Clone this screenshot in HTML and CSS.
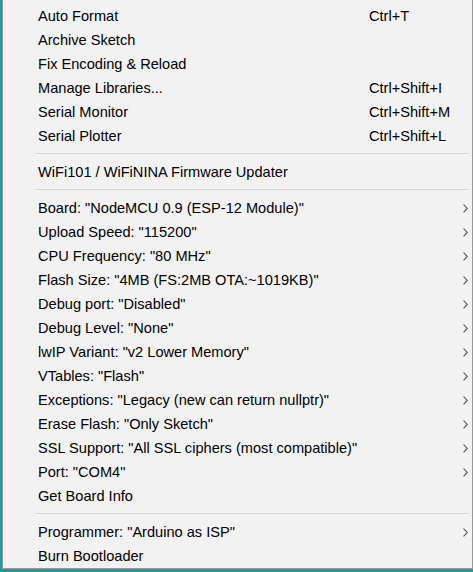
FILE: index.html
```html
<!DOCTYPE html>
<html>
<head>
<meta charset="utf-8">
<link rel="stylesheet" href="styles.css">
</head>
<body>
<div class="menu">
  <div class="item"><span class="label">Auto Format</span><span class="key">Ctrl+T</span></div>
  <div class="item"><span class="label">Archive Sketch</span></div>
  <div class="item"><span class="label">Fix Encoding &amp; Reload</span></div>
  <div class="item"><span class="label">Manage Libraries...</span><span class="key">Ctrl+Shift+I</span></div>
  <div class="item"><span class="label">Serial Monitor</span><span class="key">Ctrl+Shift+M</span></div>
  <div class="item"><span class="label">Serial Plotter</span><span class="key">Ctrl+Shift+L</span></div>
  <div class="sep"></div>
  <div class="item"><span class="label">WiFi101 / WiFiNINA Firmware Updater</span></div>
  <div class="sep"></div>
  <div class="item sub"><span class="label">Board: "NodeMCU 0.9 (ESP-12 Module)"</span><svg class="arrow" width="5" height="9" viewBox="0 0 5 9"><path d="M0.5 0.5 L4.2 4.5 L0.5 8.5" fill="none" stroke="#4a4a4a" stroke-width="1.1"/></svg></div>
  <div class="item sub"><span class="label">Upload Speed: "115200"</span><svg class="arrow" width="5" height="9" viewBox="0 0 5 9"><path d="M0.5 0.5 L4.2 4.5 L0.5 8.5" fill="none" stroke="#4a4a4a" stroke-width="1.1"/></svg></div>
  <div class="item sub"><span class="label">CPU Frequency: "80 MHz"</span><svg class="arrow" width="5" height="9" viewBox="0 0 5 9"><path d="M0.5 0.5 L4.2 4.5 L0.5 8.5" fill="none" stroke="#4a4a4a" stroke-width="1.1"/></svg></div>
  <div class="item sub"><span class="label">Flash Size: "4MB (FS:2MB OTA:~1019KB)"</span><svg class="arrow" width="5" height="9" viewBox="0 0 5 9"><path d="M0.5 0.5 L4.2 4.5 L0.5 8.5" fill="none" stroke="#4a4a4a" stroke-width="1.1"/></svg></div>
  <div class="item sub"><span class="label">Debug port: "Disabled"</span><svg class="arrow" width="5" height="9" viewBox="0 0 5 9"><path d="M0.5 0.5 L4.2 4.5 L0.5 8.5" fill="none" stroke="#4a4a4a" stroke-width="1.1"/></svg></div>
  <div class="item sub"><span class="label">Debug Level: "None"</span><svg class="arrow" width="5" height="9" viewBox="0 0 5 9"><path d="M0.5 0.5 L4.2 4.5 L0.5 8.5" fill="none" stroke="#4a4a4a" stroke-width="1.1"/></svg></div>
  <div class="item sub"><span class="label">lwIP Variant: "v2 Lower Memory"</span><svg class="arrow" width="5" height="9" viewBox="0 0 5 9"><path d="M0.5 0.5 L4.2 4.5 L0.5 8.5" fill="none" stroke="#4a4a4a" stroke-width="1.1"/></svg></div>
  <div class="item sub"><span class="label">VTables: "Flash"</span><svg class="arrow" width="5" height="9" viewBox="0 0 5 9"><path d="M0.5 0.5 L4.2 4.5 L0.5 8.5" fill="none" stroke="#4a4a4a" stroke-width="1.1"/></svg></div>
  <div class="item sub"><span class="label">Exceptions: "Legacy (new can return nullptr)"</span><svg class="arrow" width="5" height="9" viewBox="0 0 5 9"><path d="M0.5 0.5 L4.2 4.5 L0.5 8.5" fill="none" stroke="#4a4a4a" stroke-width="1.1"/></svg></div>
  <div class="item sub"><span class="label">Erase Flash: "Only Sketch"</span><svg class="arrow" width="5" height="9" viewBox="0 0 5 9"><path d="M0.5 0.5 L4.2 4.5 L0.5 8.5" fill="none" stroke="#4a4a4a" stroke-width="1.1"/></svg></div>
  <div class="item sub"><span class="label">SSL Support: "All SSL ciphers (most compatible)"</span><svg class="arrow" width="5" height="9" viewBox="0 0 5 9"><path d="M0.5 0.5 L4.2 4.5 L0.5 8.5" fill="none" stroke="#4a4a4a" stroke-width="1.1"/></svg></div>
  <div class="item sub"><span class="label">Port: "COM4"</span><svg class="arrow" width="5" height="9" viewBox="0 0 5 9"><path d="M0.5 0.5 L4.2 4.5 L0.5 8.5" fill="none" stroke="#4a4a4a" stroke-width="1.1"/></svg></div>
  <div class="item"><span class="label">Get Board Info</span></div>
  <div class="sep"></div>
  <div class="item sub"><span class="label">Programmer: "Arduino as ISP"</span><svg class="arrow" width="5" height="9" viewBox="0 0 5 9"><path d="M0.5 0.5 L4.2 4.5 L0.5 8.5" fill="none" stroke="#4a4a4a" stroke-width="1.1"/></svg></div>
  <div class="item"><span class="label">Burn Bootloader</span></div>
</div>
</body>
</html>
```
FILE: styles.css
```css
html, body {
  margin: 0;
  padding: 0;
}
body {
  width: 473px;
  height: 572px;
  background: #1f9aa0;
  overflow: hidden;
  font-family: "Liberation Sans", Arial, sans-serif;
  font-size: 14.6px;
  color: #000;
}
.menu {
  margin-left: 2px;
  width: 471px;
  height: 569px;
  box-sizing: border-box;
  background: #f2f2f2;
  border-left: 1px solid #999;
  border-right: 1px solid #999;
  border-bottom: 1px solid #999;
  padding-top: 4px;
}
.item {
  display: flex;
  align-items: center;
  height: 24px;
  padding-left: 35px;
  padding-right: 4px;
  white-space: nowrap;
}
.label {
  width: 331px;
  flex: none;
}
.key {
  flex: 1;
}
.arrow {
  margin-left: auto;
  flex: none;
}
.sep {
  height: 1px;
  background: #d7d7d7;
  margin: 5px 3px 6px 32px;
}
```
